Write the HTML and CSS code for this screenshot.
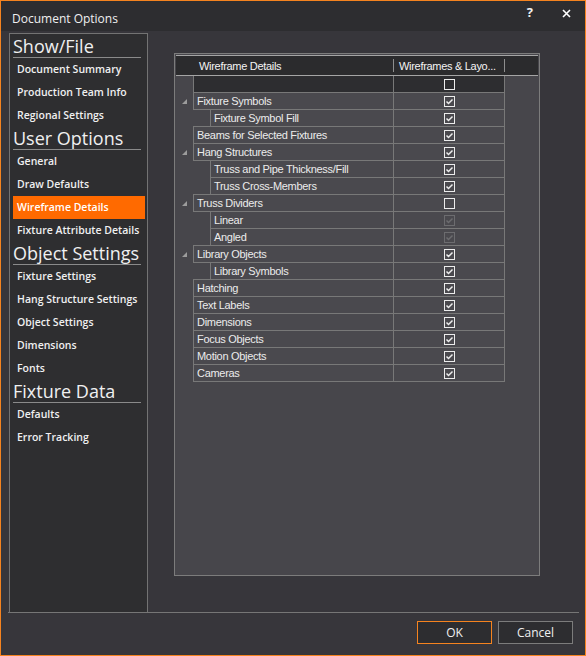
FILE: index.html
```html
<!DOCTYPE html>
<html lang="en">
<head>
    <meta charset="UTF-8">
    <title>Document Options</title>
    <link rel="stylesheet" href="styles.css">
</head>
<body>

<div class="window">
    <div class="titlebar">
        <span class="title">Document Options</span>
        <span class="tb-help">?</span>
        <span class="tb-close">
            <svg width="9" height="9" viewBox="0 0 9 9"><path d="M1 1L8 8M8 1L1 8" stroke="#fff" stroke-width="1.6"/></svg>
        </span>
    </div>

    <div class="content">
        <div class="sidebar">
            <div class="nav-head">Show/File</div>
            <div class="nav-item">Document Summary</div>
            <div class="nav-item">Production Team Info</div>
            <div class="nav-item">Regional Settings</div>
            <div class="nav-head">User Options</div>
            <div class="nav-item">General</div>
            <div class="nav-item">Draw Defaults</div>
            <div class="nav-item active">Wireframe Details</div>
            <div class="nav-item">Fixture Attribute Details</div>
            <div class="nav-head">Object Settings</div>
            <div class="nav-item">Fixture Settings</div>
            <div class="nav-item">Hang Structure Settings</div>
            <div class="nav-item">Object Settings</div>
            <div class="nav-item">Dimensions</div>
            <div class="nav-item">Fonts</div>
            <div class="nav-head">Fixture Data</div>
            <div class="nav-item">Defaults</div>
            <div class="nav-item">Error Tracking</div>
        </div>

        <div class="panel">
            <div class="grid-head">
                <span class="gh-name">Wireframe Details</span>
                <span class="gh-sep"></span>
                <span class="gh-check">Wireframes &amp; Layo...</span>
                <span class="gh-sep"></span>
            </div>
            <div id="rows"></div>
        </div>
    </div>

    <div class="separator"></div>

    <div class="buttons">
        <button class="btn btn-ok">OK</button>
        <button class="btn">Cancel</button>
    </div>
</div>

<script>
    // level 0 = top level, 1 = child; state: 1 checked, 0 unchecked, 2 disabled
    var rows = [
        { name: '', level: 0, state: 0, blank: true },
        { name: 'Fixture Symbols', level: 0, state: 1, open: true },
        { name: 'Fixture Symbol Fill', level: 1, state: 1 },
        { name: 'Beams for Selected Fixtures', level: 0, state: 1 },
        { name: 'Hang Structures', level: 0, state: 1, open: true },
        { name: 'Truss and Pipe Thickness/Fill', level: 1, state: 1 },
        { name: 'Truss Cross-Members', level: 1, state: 1 },
        { name: 'Truss Dividers', level: 0, state: 0, open: true },
        { name: 'Linear', level: 1, state: 2 },
        { name: 'Angled', level: 1, state: 2 },
        { name: 'Library Objects', level: 0, state: 1, open: true },
        { name: 'Library Symbols', level: 1, state: 1 },
        { name: 'Hatching', level: 0, state: 1 },
        { name: 'Text Labels', level: 0, state: 1 },
        { name: 'Dimensions', level: 0, state: 1 },
        { name: 'Focus Objects', level: 0, state: 1 },
        { name: 'Motion Objects', level: 0, state: 1 },
        { name: 'Cameras', level: 0, state: 1 }
    ];

    function checkbox(state) {
        var mark = state ? '<path d="M2.5 5.5L4.5 7.5L8.5 3.5" fill="none" stroke-width="1.5"/>' : '';
        return '<svg class="cb' + (state === 2 ? ' disabled' : '') + '" width="11" height="11" viewBox="0 0 11 11">' +
            '<rect x="0.5" y="0.5" width="10" height="10" fill="none"/>' + mark + '</svg>';
    }

    var html = '';
    rows.forEach(function(r) {
        var cls = 'row' + (r.level ? ' child' : ' top') + (r.blank ? ' blank' : '');
        var arrow = r.open ? '<svg class="expander" width="5" height="5" viewBox="0 0 5 5"><path d="M5 0V5H0Z"/></svg>' : '';
        html += '<div class="' + cls + '">' +
            '<span class="gutter">' + arrow + '</span>' +
            '<span class="name">' + r.name + '</span>' +
            '<span class="check">' + checkbox(r.state) + '</span>' +
            '</div>';
    });
    document.getElementById('rows').innerHTML = html;
</script>

</body>
</html>
```

FILE: styles.css
```css
body {
    margin: 0;
    font-family: "Open Sans", "Noto Sans", sans-serif;
    background-color: #37363b;
}

.window {
    width: 586px;
    height: 656px;
    box-sizing: border-box;
    border: 1px solid #f5831f;
    background-color: #37363b;
    display: flex;
    flex-direction: column;
}

/* title bar */

.titlebar {
    height: 30px;
    flex-shrink: 0;
    background-color: #2d2d30;
    display: flex;
    align-items: flex-start;
    color: #f0f0f0;
}

.title {
    font-size: 12px;
    line-height: 16px;
    padding: 10px 0 0 11px;
}

.tb-help {
    margin-left: auto;
    font-size: 13px;
    font-weight: 700;
    line-height: 16px;
    padding-top: 3px;
}

.tb-close {
    display: flex;
    margin: 8px 14px 0 29px;
}

/* content */

.content {
    flex: 1;
    display: flex;
    align-items: flex-start;
    padding: 1px 0 0 8px;
    min-height: 0;
}

.sidebar {
    width: 139px;
    height: 580px;
    margin-top: 1px;
    box-sizing: border-box;
    border: 1px solid #737373;
    background-color: #2e2e30;
    padding: 1px 2px 0 3px;
}

.nav-head {
    height: 22px;
    line-height: 22px;
    margin-right: 4px;
    border-bottom: 1px solid #8a8a8a;
    font-size: 18px;
    color: #f0f0f0;
    white-space: nowrap;
}

.nav-item {
    height: 23px;
    line-height: 23px;
    padding-left: 4px;
    font-size: 10.5px;
    font-weight: 600;
    color: #f0f0f0;
    white-space: nowrap;
}

.nav-item.active {
    background-color: #ff6a00;
    color: #fff;
}

/* grid panel */

.panel {
    width: 366px;
    height: 523px;
    margin: 21px 0 0 26px;
    box-sizing: border-box;
    border: 1px solid #7c7c7c;
    padding: 1px;
    background-color: #47464b;
    font-family: "Liberation Sans", Arial, sans-serif;
    font-size: 11px;
    letter-spacing: -0.3px;
    color: #ececec;
}

.grid-head {
    height: 21px;
    box-sizing: border-box;
    border-top: 1px solid #a5a5a5;
    border-bottom: 1px solid #a5a5a5;
    background-color: #2b2b2d;
    display: flex;
    align-items: center;
    color: #f4f4f4;
}

.gh-name {
    width: 217px;
    box-sizing: border-box;
    padding-left: 23px;
}

.gh-check {
    width: 110px;
    box-sizing: border-box;
    padding-left: 5px;
    white-space: nowrap;
}

.gh-sep {
    width: 1px;
    height: 13px;
    background-color: #8e8e8e;
}

.row {
    display: flex;
    height: 17px;
}

.gutter {
    width: 17px;
    display: flex;
    align-items: center;
    padding-left: 6px;
    box-sizing: border-box;
}

.row.child .gutter {
    width: 34px;
}

.expander {
    fill: #9c9c9c;
}

.name,
.check {
    box-sizing: border-box;
    height: 17px;
    border-left: 1px solid #787878;
    border-bottom: 1px solid #787878;
    background-color: #4a494e;
}

.name {
    width: 200px;
    padding-left: 3px;
    line-height: 16px;
    white-space: nowrap;
}

.row.child .name {
    width: 183px;
}

.check {
    width: 112px;
    border-right: 1px solid #787878;
    display: flex;
    align-items: center;
    justify-content: center;
}

.row.top .name,
.row.top .check {
    box-shadow: 0 -1px 0 #787878;
}

.row.blank .name,
.row.blank .check {
    background-color: #2d2d30;
    box-shadow: none;
}

.cb {
    stroke: #ececec;
}

.cb.disabled {
    stroke: #6c6c6f;
}

/* footer */

.separator {
    height: 1px;
    margin: 0 6px 0 7px;
    background-color: #767676;
    flex-shrink: 0;
}

.buttons {
    display: flex;
    justify-content: flex-end;
    gap: 6px;
    padding: 8px 12px 11px 0;
}

.btn {
    width: 75px;
    height: 23px;
    box-sizing: border-box;
    border: 1px solid #7c7c7c;
    background-color: #2d2d30;
    color: #f0f0f0;
    font-family: "Open Sans", "Noto Sans", sans-serif;
    font-size: 12px;
    padding: 0;
}

.btn-ok {
    border-color: #f5831f;
}
```
